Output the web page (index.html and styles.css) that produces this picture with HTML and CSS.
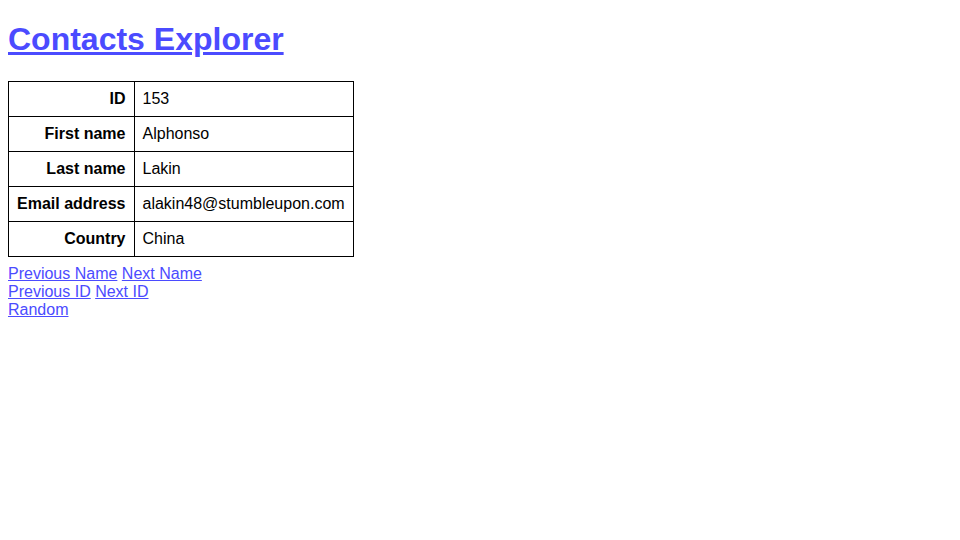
FILE: index.html
```html
<!DOCTYPE html>
<html>
<head>
<meta charset="utf-8">
<title>Contacts Explorer</title>
<link rel="stylesheet" href="styles.css">
</head>
<body>
<h1 class="title"><a href="#">Contacts Explorer</a></h1>
<table class="contact">
<tr><th>ID</th><td>153</td></tr>
<tr><th>First name</th><td>Alphonso</td></tr>
<tr><th>Last name</th><td>Lakin</td></tr>
<tr><th>Email address</th><td>alakin48@stumbleupon.com</td></tr>
<tr><th>Country</th><td>China</td></tr>
</table>
<div class="nav">
<div><a href="#">Previous Name</a> <a href="#">Next Name</a></div>
<div><a href="#">Previous ID</a> <a href="#">Next ID</a></div>
<div><a href="#">Random</a></div>
</div>
</body>
</html>
```
FILE: styles.css
```css
body {
  margin: 8px;
  font-family: "Liberation Sans", Arial, sans-serif;
  font-size: 16px;
  color: #000;
  background: #fff;
}
a { color: #4b4bff; }
.title {
  font-size: 32px;
  font-weight: bold;
  margin: 13px 0 23px;
}
.contact {
  border-collapse: collapse;
}
.contact th, .contact td {
  border: 1px solid #000;
  padding: 8px;
  height: 18px;
  line-height: 18px;
}
.contact th {
  text-align: right;
  font-weight: bold;
}
.contact td {
  text-align: left;
  width: 193px;
}
.nav {
  margin-top: 8px;
  line-height: 18px;
}
```
